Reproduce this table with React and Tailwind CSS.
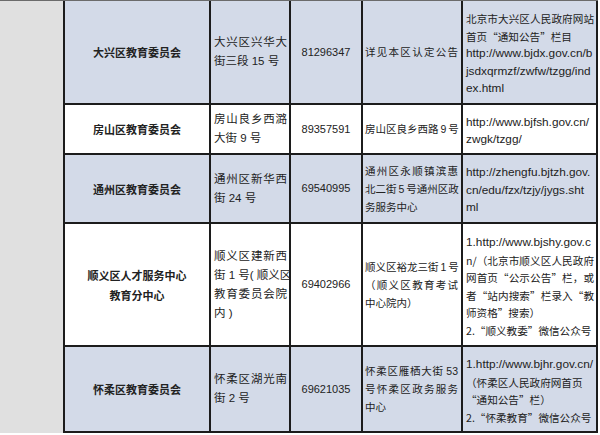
import React from "react";

const rows = [
  {
    h: "h-[104px]",
    bg: "bg-[#d3dae8]",
    name: ["大兴区教育委员会"],
    addr: ["大兴区兴华大", "街三段 15 号"],
    phone: "81296347",
    place: ["详见本区认定公告"],
    site: [
      ["北京市大兴区人民政府网站", true],
      ["首页“通知公告”栏目"],
      ["http://www.bjdx.gov.cn/b"],
      ["jsdxqrmzf/zwfw/tzgg/ind"],
      ["ex.html"],
    ],
  },
  {
    h: "h-[50px]",
    bg: "bg-white",
    name: ["房山区教育委员会"],
    addr: ["房山良乡西潞", "大街 9 号"],
    phone: "89357591",
    place: ["房山区良乡西路 9 号"],
    site: [["http://www.bjfsh.gov.cn/"], ["zwgk/tzgg/"]],
  },
  {
    h: "h-[69px]",
    bg: "bg-[#d3dae8]",
    name: ["通州区教育委员会"],
    addr: ["通州区新华西", "街 24 号"],
    phone: "69540995",
    place: ["通州区永顺镇滨惠", "北二街 5 号通州区政", "务服务中心"],
    site: [
      ["http://zhengfu.bjtzh.gov."],
      ["cn/edu/fzx/tzjy/jygs.sht"],
      ["ml"],
    ],
  },
  {
    h: "h-[123px]",
    bg: "bg-white",
    name: ["顺义区人才服务中心", "教育分中心"],
    addr: ["顺义区建新西", "街 1 号( 顺义区", "教育委员会院", "内 )"],
    phone: "69402966",
    place: ["顺义区裕龙三街 1 号", "（顺义区教育考试", "中心院内）"],
    site: [
      ["1.http://www.bjshy.gov.c"],
      ["n/（北京市顺义区人民政府", true],
      ["网首页“公示公告”栏，或", true],
      ["者“站内搜索”栏录入“教", true],
      ["师资格”搜索）"],
      ["2.“顺义教委”微信公众号"],
    ],
  },
  {
    h: "h-[86px]",
    bg: "bg-[#d3dae8]",
    name: ["怀柔区教育委员会"],
    addr: ["怀柔区湖光南", "街 2 号"],
    phone: "69621035",
    place: ["怀柔区雁栖大街 53", "号怀柔区政务服务", "中心"],
    site: [
      ["1.http://www.bjhr.gov.cn/"],
      ["（怀柔区人民政府网首页"],
      ["“通知公告”栏）"],
      ["2.“怀柔教育”微信公众号"],
    ],
  },
];

const spreadCls = "text-justify [text-align-last:justify]";
const cjk = { fontFamily: '"Noto Sans CJK SC", "Liberation Sans", sans-serif' };
const latin = { fontFamily: '"Liberation Sans", "Noto Sans CJK SC", sans-serif' };

// every line but the last is spread to the cell width; a one-line cell is spread too
const Lines = ({ lines }) =>
  lines.map((l, i) => (
    <span
      key={i}
      className={"block whitespace-nowrap " + (i < lines.length - 1 || lines.length === 1 ? spreadCls : "")}
    >
      {l}
    </span>
  ));

// plain ascii lines are the url pieces
const isUrl = (t) => /^[\x20-\x7e]+$/.test(t);

const Row = ({ r }) => (
  <div className={`flex ${r.h} ${r.bg} border-b-2 border-[#1c1c1c]`}>
    {/* name */}
    <div
      className="w-[146px] flex flex-col items-center justify-center border-r-2 border-[#1c1c1c] text-[11px] font-bold leading-[20px]"
      style={cjk}
    >
      {r.name.map((n) => (
        <span key={n}>{n}</span>
      ))}
    </div>
    {/* address */}
    <div className="w-[80px] flex flex-col justify-center pl-[3px] pr-[2px] border-r-2 border-[#1c1c1c] text-[11.5px] leading-[19px] overflow-hidden">
      {r.addr.map((l, i) => (
        <span key={i} className={"block whitespace-nowrap " + (i < r.addr.length - 1 ? spreadCls : "")}>
          {l}
        </span>
      ))}
    </div>
    {/* phone */}
    <div className="w-[72px] flex items-center justify-center border-r-2 border-[#1c1c1c] text-[11px]">
      {r.phone}
    </div>
    {/* place */}
    <div className="w-[100px] flex flex-col justify-center pl-[2px] pr-[3px] border-r-2 border-[#1c1c1c] text-[10.5px] leading-[18px] overflow-hidden [word-spacing:-1px]">
      <Lines lines={r.place} />
    </div>
    {/* website */}
    <div className="w-[135px] flex flex-col justify-center pl-[3px] pr-[2px] pt-[4px] border-r-2 border-[#1c1c1c] leading-[17.5px] overflow-hidden">
      {r.site.map(([t, sp], i) => (
        <span
          key={i}
          style={isUrl(t) ? latin : cjk}
          className={
            "block whitespace-nowrap " + (isUrl(t) ? "text-[11.8px] " : "text-[10.6px] ") + (sp ? spreadCls : "")
          }
        >
          {t}
        </span>
      ))}
    </div>
  </div>
);

const App = () => {
  return (
    <div className="w-[600px] h-[435px] bg-white text-[#222222] overflow-hidden" style={latin}>
      <div className="flex w-[598px] border-t border-[#6b6b6b]">
        <div className="w-[65px] h-[432px] bg-[#e0e0e0] border-r-2 border-[#1c1c1c]" />
        <div className="flex flex-col">
          {rows.map((r) => (
            <Row key={r.phone} r={r} />
          ))}
        </div>
      </div>
    </div>
  );
};

export default App;
